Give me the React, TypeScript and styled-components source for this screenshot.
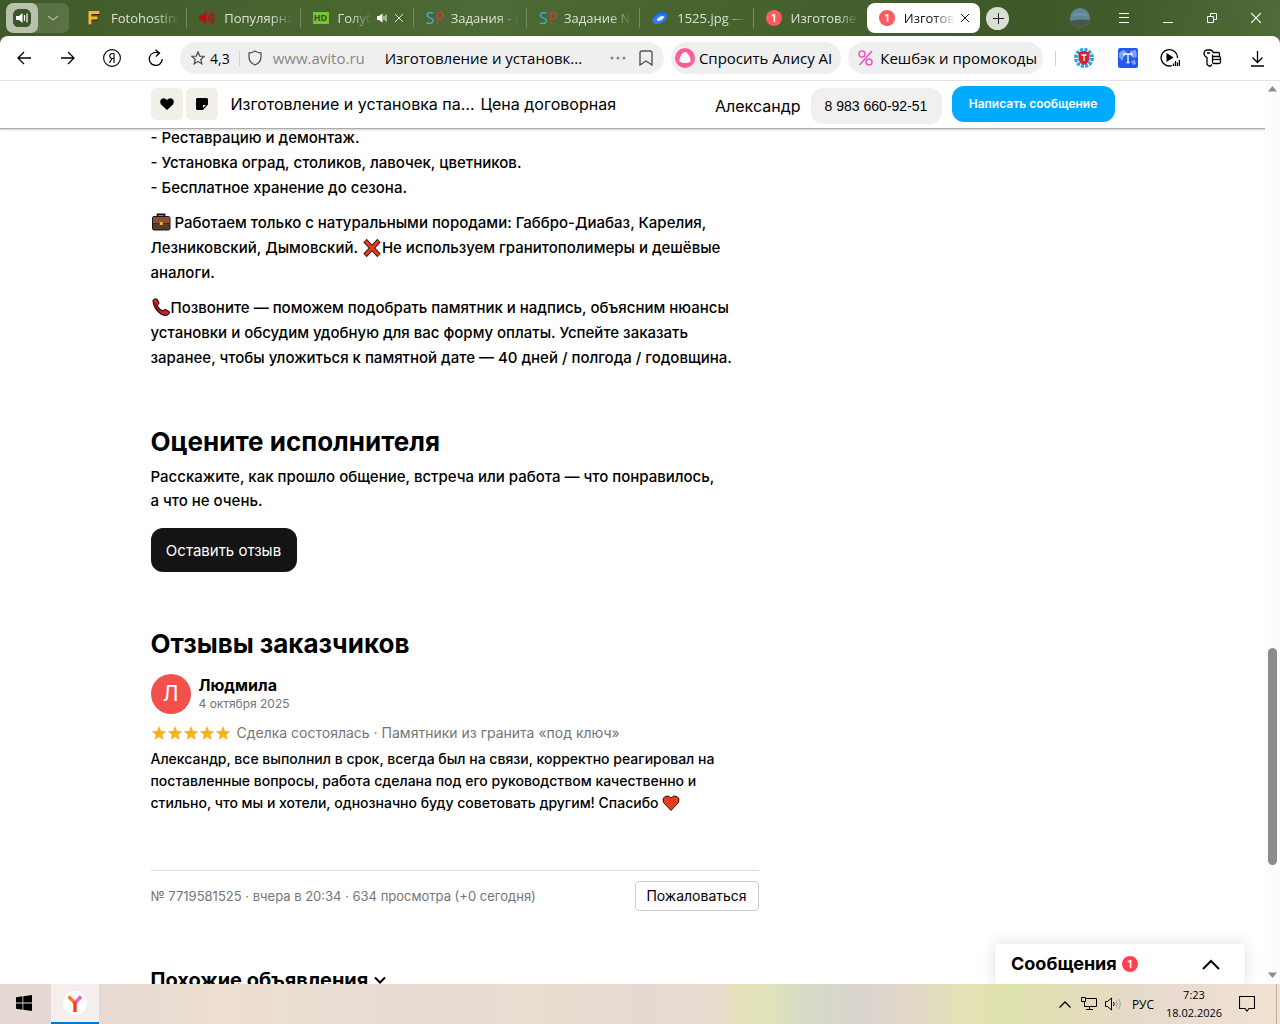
import React from "react";
import styled, { createGlobalStyle, css } from "styled-components";

const pageFont = `Inter, "Noto Sans", sans-serif`;
const uiFont = `"Open Sans", "Noto Sans", sans-serif`;

const GlobalStyle = createGlobalStyle`
  *, *::before, *::after { box-sizing: border-box; }
  body { margin: 0; background: #fff; overflow: hidden; }
  h1, h2, p { margin: 0; }
  button, input { font: inherit; color: inherit; border: 0; padding: 0; margin: 0; background: none; }
  a { color: inherit; text-decoration: none; }
  svg { display: block; flex: none; }
`;

const Shell = styled.div`
  display: flex;
  flex-direction: column;
  height: 100vh;
  font-family: ${uiFont};
  color: #000;
  background: linear-gradient(100deg, #3f5a28 0, #445f2b 10%, #4c6a35 38%, #47632e 55%, #445f2c 68%, #3d5726 80%, #425d2b 88%, #4f6d38 100%) top / 100% 60px no-repeat;
`;

/* ---------- tab strip ---------- */
const TabStrip = styled.header`
  display: flex;
  align-items: center;
  flex: none;
  height: 36px;
  padding-left: 6px;
  color: #fff;
  font-size: 13px;
`;

const SoundGroup = styled.div`
  display: flex;
  flex: none;
  width: 63px;
  height: 30px;
  margin-right: 5px;
  border-radius: 7px;
  overflow: hidden;
  background: rgba(255, 255, 255, 0.13);
`;

const SoundButton = styled.button<{ $on?: boolean }>`
  display: flex;
  align-items: center;
  justify-content: center;
  width: 32px;
  border-radius: 7px;
  background: ${(p) => (p.$on ? "#b7c1ab" : "transparent")};
`;

const Tabs = styled.nav`
  display: flex;
  flex: 0 1 906px;
  min-width: 0;
  height: 30px;
`;

const TabBox = styled.div<{ $active?: boolean; $last?: boolean }>`
  display: flex;
  align-items: center;
  flex: 1 1 0;
  min-width: 0;
  padding: 0 8px 0 12px;
  gap: 3px;
  ${(p) =>
    p.$active
      ? css`
          background: #fff;
          color: #111;
          border-radius: 8px;
        `
      : css`
          color: #dbe1d5;
          background: ${p.$last
            ? "none"
            : "linear-gradient(#768a65, #768a65) right 5px / 1px 20px no-repeat"};
        `}
`;

const TabButton = styled.button`
  display: flex;
  align-items: center;
  flex: 1;
  min-width: 0;
  height: 100%;
  gap: 9px;
`;

const TabLabel = styled.span`
  flex: 1;
  min-width: 0;
  overflow: hidden;
  white-space: nowrap;
  text-align: left;
  line-height: 20px;
  mask-image: linear-gradient(to right, #000 calc(100% - 22px), transparent);
`;

const TinyButton = styled.button`
  display: flex;
  align-items: center;
  justify-content: center;
  flex: none;
  width: 14px;
  height: 16px;
`;

const NewTab = styled.button`
  display: flex;
  align-items: center;
  justify-content: center;
  flex: none;
  width: 23px;
  height: 23px;
  margin-left: 6px;
  border-radius: 50%;
  background: #d9dfd3;
`;

const WindowControls = styled.div`
  display: flex;
  margin-left: auto;
  padding-right: 2px;
`;

const IconCell = styled.button<{ $w?: number }>`
  display: flex;
  align-items: center;
  justify-content: center;
  flex: none;
  width: ${(p) => p.$w ?? 44}px;
  height: 36px;
`;

const CountBadge = styled.span<{ $color?: string }>`
  display: flex;
  align-items: center;
  justify-content: center;
  flex: none;
  width: 16px;
  height: 16px;
  border-radius: 50%;
  background: ${(p) => p.$color ?? "#ff5a5f"};
  color: #fff;
  font: 600 11px/16px ${pageFont};
`;

const SpMark = styled.span`
  flex: none;
  width: 16px;
  font: 16px/20px "Open Sans", sans-serif;
  color: #4ba6d8;
  b { font-weight: 400; color: #b8453c; }
`;

const HdMark = styled.span`
  flex: none;
  width: 16px;
  background: #76c335;
  border-radius: 1px;
  color: #35541b;
  font: 700 9px/12px ${uiFont};
  text-align: center;
`;

/* ---------- toolbar ---------- */
const Toolbar = styled.div`
  display: flex;
  align-items: center;
  flex: none;
  height: 45px;
  padding: 0 1px 0 2px;
  background: #fff;
  border-bottom: 1px solid #e2e2e2;
  border-radius: 8px 8px 0 0;
  font-size: 15px;
`;

const AddressBar = styled.div`
  display: flex;
  align-items: center;
  flex: 1 1 0;
  min-width: 0;
  height: 32px;
  margin-left: 2px;
  padding: 0 6px 0 11px;
  border-radius: 16px;
  background: #efefef;
`;

const Rating = styled.button`
  display: flex;
  align-items: center;
  gap: 5px;
  font-size: 14px;
`;

const Divider = styled.span<{ $before: number; $after: number }>`
  flex: none;
  width: 1px;
  height: 15px;
  margin: 0 ${(p) => p.$after}px 0 ${(p) => p.$before}px;
  background: #d2d2d2;
`;

const Host = styled.a`
  margin: 0 20px 0 11px;
  color: #888;
`;

const AddressInput = styled.input`
  flex: 1;
  min-width: 0;
  outline: none;
  text-overflow: ellipsis;
`;

const Pill = styled.button<{ $end: number }>`
  display: flex;
  align-items: center;
  flex: none;
  gap: 4px;
  height: 32px;
  margin-left: 7px;
  padding: 0 ${(p) => p.$end}px 0 4px;
  border-radius: 16px;
  background: #efefef;
  white-space: nowrap;
`;

/* ---------- page ---------- */
const Viewport = styled.div`
  position: relative;
  display: flex;
  flex: 1;
  min-height: 0;
  background: #fff;
`;

const Page = styled.div`
  flex: 1;
  min-width: 0;
  overflow: hidden;
  font-family: ${pageFont};
`;

const StickyBar = styled.div`
  position: relative;
  z-index: 1;
  height: 48px;
  background: #fff;
  border-bottom: 1px solid #aaa;
  box-shadow: 0 1px 2px rgba(0, 0, 0, 0.2);
`;

const Container = styled.div`
  max-width: 964px;
  margin: 0 auto;
`;

const BarRow = styled(Container)`
  display: flex;
  align-items: flex-start;
  padding-top: 5px;
  font-size: 16px;
  line-height: 24px;
  white-space: nowrap;
`;

const SquareButton = styled.button`
  display: flex;
  align-items: center;
  justify-content: center;
  width: 32px;
  height: 32px;
  margin: 2px 3px 0 0;
  border-radius: 5px;
  background: #f2efe8;
`;

const BarTitle = styled.span`
  width: 250px;
  margin-left: 10px;
  padding-top: 6px;
`;

const BarPrice = styled.span`
  padding-top: 6px;
`;

const Seller = styled.a`
  margin-left: auto;
  padding-top: 8px;
`;

const PhoneButton = styled.button`
  width: 131px;
  height: 36px;
  margin: 2px 10px 0;
  border-radius: 12px;
  background: #f1f0ee;
  font: 14px "Liberation Sans", Arial, sans-serif;
`;

const MessageButton = styled.button`
  width: 163px;
  height: 36px;
  border-radius: 12px;
  background: #00aaff;
  color: #fff;
  font-size: 12px;
  font-weight: 600;
`;

const Article = styled.main`
  max-width: 608px;
  margin-top: -4px;
`;

const Description = styled.section`
  display: flex;
  flex-direction: column;
  gap: 10px;
  font-size: 15px;
  font-weight: 500;
  line-height: 25px;
  white-space: nowrap;
`;

const Emoji = styled.svg`
  display: inline-block;
  vertical-align: -4px;
`;

const Title = styled.h2`
  font-size: 26px;
  line-height: 32px;
  font-weight: 700;
`;

const Rate = styled.section`
  padding: 56px 0;
  p {
    margin: 7px 0 15px;
    font-size: 15px;
    font-weight: 500;
    line-height: 24px;
    white-space: nowrap;
  }
`;

const DarkButton = styled.button`
  display: block;
  width: 146px;
  height: 44px;
  border-radius: 12px;
  background: #141414;
  color: #fff;
  font-size: 15px;
`;

const Author = styled.div`
  display: flex;
  gap: 8px;
  margin-top: 14px;
`;

const Avatar = styled.span`
  width: 40px;
  height: 40px;
  border-radius: 50%;
  background: #f2504b;
  color: #fff;
  font-size: 21px;
  line-height: 40px;
  text-align: center;
`;

const AuthorText = styled.div`
  strong { display: block; font-size: 16px; line-height: 22px; }
  time { display: block; font-size: 12px; line-height: 16px; color: #757575; }
`;

const Deal = styled.p`
  display: flex;
  align-items: center;
  margin-top: 8px;
  font-size: 14px;
  line-height: 22px;
  color: #757575;
  gap: 6px;
`;

const Stars = styled.span`
  display: flex;
`;

const ReviewText = styled.p`
  margin-top: 4px;
  font-size: 14px;
  font-weight: 500;
  line-height: 22px;
  white-space: nowrap;
`;

const Meta = styled.footer`
  display: flex;
  align-items: center;
  justify-content: space-between;
  margin-top: 56px;
  padding-top: 10px;
  border-top: 1px solid #dadada;
  font-size: 13px;
  color: #757575;
`;

const ReportButton = styled.button`
  width: 124px;
  height: 30px;
  padding-bottom: 2px;
  border: 1px solid #ccc;
  border-radius: 4px;
  color: #000;
  font-size: 14px;
`;

const Similar = styled.h2`
  display: flex;
  align-items: center;
  gap: 6px;
  margin-top: 55px;
  font-size: 20px;
  line-height: 28px;
`;

const Scrollbar = styled.div`
  display: flex;
  flex-direction: column;
  align-items: center;
  flex: none;
  width: 15px;
  padding: 5px 0 6px;
  background: #fcfcfc;
`;

const Thumb = styled.span`
  width: 9px;
  flex: 217 1 0;
  border-radius: 5px;
  background: #8b8b8b;
`;

const Space = styled.span<{ $grow: number }>`
  flex: ${(p) => p.$grow} 1 0;
`;

const Chat = styled.button`
  position: absolute;
  right: 35px;
  bottom: 0;
  z-index: 2;
  display: flex;
  align-items: center;
  gap: 5px;
  width: 250px;
  height: 40px;
  padding: 0 25px 0 16px;
  border-radius: 4px;
  background: #fff;
  box-shadow: 0 0 16px rgba(0, 0, 0, 0.14);
  font: 700 18px/24px ${pageFont};
  svg { margin-left: auto; }
`;

/* ---------- taskbar ---------- */
const Taskbar = styled.footer`
  position: relative;
  z-index: 3;
  display: flex;
  flex: none;
  height: 40px;
  font-size: 12px;
  background: linear-gradient(90deg, #e5d8d3 0, #e7dad2 10%, #ecdfd1 17%, #e8dbd3 32%, #e9dcd0 42%, #e6d9d1 50%, #e7dacf 56%, #e6dfba 57.5%, #e0e3ba 60%, #d6dbc6 63%, #dad4d0 67.5%, #e2d7c9 71%, #e3e1b6 75%, #dfe3ae 79%, #e4dcbc 85%, #e7dad0 91%, #f1e2d1 100%);
`;

const AppButton = styled.button<{ $active?: boolean }>`
  display: flex;
  align-items: center;
  justify-content: center;
  width: 48px;
  margin-right: 3px;
  border-bottom: 2px solid ${(p) => (p.$active ? "#0078d7" : "transparent")};
  background: ${(p) => (p.$active ? "#f4efec" : "transparent")};
`;

const Tray = styled.div`
  display: flex;
  align-items: center;
  margin-left: auto;
  border-right: 1px solid #b9aca2;
  margin-right: 3px;
`;

const TrayButton = styled.button<{ $w: number }>`
  display: flex;
  align-items: center;
  justify-content: center;
  width: ${(p) => p.$w}px;
  height: 40px;
`;

const Clock = styled.button`
  width: 66px;
  font-size: 11px;
  line-height: 18px;
  text-align: center;
  white-space: nowrap;
`;

/* ---------- drawings ---------- */
const Cross = ({ size = 10, w = 1 }: { size?: number; w?: number }) => (
  <svg width={size} height={size} viewBox="0 0 10 10" stroke="currentColor" strokeWidth={w}>
    <path d="M1 1l8 8M9 1l-8 8" />
  </svg>
);

const Speaker = ({ size, color }: { size: number; color: string }) => (
  <svg width={size} height={size} viewBox="0 0 16 16" fill="none" stroke={color} strokeWidth="1.5">
    <path d="M0 5.500h2.500L7.500 1.500v13L2.500 10.500H0z" fill={color} stroke="none" />
    <path d="M9 5.500q1.600 2.500 0 5M11 3.500q3 4.500 0 9M13 2q4 6 0 12" />
  </svg>
);

const SmallSpeaker = () => (
  <svg width="10" height="10" viewBox="0 0 10 10">
    <path d="M0 3h2l3.500-2.500v9L2 7H0z" fill="#fff" />
    <path d="M7 3v4M9 1.500v7" stroke="#fff" />
  </svg>
);

const FotoIcon = () => (
  <svg width="16" height="16" viewBox="0 0 16 16">
    <path d="M4.500 3v12M5 3.500h9M5 9h7" stroke="#3a2410" strokeWidth="3" fill="none" />
    <path d="M4 1v13.500M3 2.500h10.500M3 8h8.500" stroke="#ffb52e" strokeWidth="3" fill="none" />
  </svg>
);

const DiskIcon = () => (
  <svg width="16" height="14" viewBox="0 0 17 14">
    <ellipse cx="9" cy="5.500" rx="7.500" ry="4.600" transform="rotate(-24 9 5.500)" fill="#1f62e8" />
    <ellipse cx="8" cy="8" rx="8" ry="4.600" transform="rotate(-24 8 8)" fill="#2f7bff" />
    <ellipse cx="9" cy="7.500" rx="4" ry="1.800" transform="rotate(-30 9 7.500)" fill="#fff" />
  </svg>
);

const Star = () => (
  <svg width="16" height="16" viewBox="0 0 16 16" fill="#ffaf1c">
    <path d="M8 .8l2 5.100 5.400.3-4.200 3.500 1.400 5.300L8 12l-4.600 3 1.400-5.300L.6 6.200 6 5.900z" />
  </svg>
);

const Briefcase = () => (
  <Emoji width="20" height="20" viewBox="0 0 20 20">
    <path d="M6.500 5V2.500h7V5" fill="none" stroke="#1c1412" strokeWidth="1.800" />
    <rect x="1.500" y="4.500" width="17.500" height="13.500" rx="1.500" fill="#5b3a32" stroke="#1c1412" />
    <path d="M2 5h16.500v6.500H2z" fill="#8a5335" />
    <path d="M2 11.500h16.500" stroke="#43291f" />
    <rect x="8.800" y="10" width="3" height="3" rx=".5" fill="#f5b51d" />
  </Emoji>
);

const RedCross = () => (
  <Emoji width="20" height="18" viewBox="0 0 20 18">
    <path d="M3 1.500l14 15M17 1.500L3 16.500" stroke="#241512" strokeWidth="4.800" />
    <path d="M3.400 2l13.200 14M16.600 2L3.400 16" stroke="#e93a1c" strokeWidth="3" />
  </Emoji>
);

const Handset = () => (
  <Emoji width="20" height="20" viewBox="0 0 20 20">
    <path
      d="M2 3.500Q4 1 6 2.500l2 3.500-2 2.500q2 4 5.500 5.500l2.500-1.500 4 2q1 1.500-1.500 3.500-4 1.500-9-3T2 3.500z"
      fill="#d91e2e"
      stroke="#241512"
      strokeWidth="1.200"
    />
    <path d="M3.500 6q1 5 5.500 9" stroke="#8f0f1c" strokeWidth="1.500" fill="none" />
  </Emoji>
);

const RedHeart = () => (
  <Emoji width="18" height="18" viewBox="0 0 18 18">
    <path
      d="M9 16.500L1.500 8.500Q-.2 4.500 3 2.500 6.500.800 9 4q2.500-3.200 6-1.500 3.200 2 1.500 6z"
      fill="#ef3b17"
      stroke="#241512"
    />
  </Emoji>
);

const tabs: { icon: React.ReactNode; label: string; sound?: boolean; active?: boolean; last?: boolean }[] = [
  { icon: <FotoIcon />, label: "Fotohosting" },
  { icon: <Speaker size={16} color="#b80f0f" />, label: "Популярна" },
  { icon: <HdMark>HD</HdMark>, label: "Голуб", sound: true },
  { icon: <SpMark>S<b>P</b></SpMark>, label: "Задания - в" },
  { icon: <SpMark>S<b>P</b></SpMark>, label: "Задание №" },
  { icon: <DiskIcon />, label: "1525.jpg —" },
  { icon: <CountBadge>1</CountBadge>, label: "Изготовле", last: true },
  { icon: <CountBadge>1</CountBadge>, label: "Изготов", active: true },
];

const line = { fill: "none", stroke: "currentColor", strokeWidth: 1.3 } as const;

export default function App() {
  return (
    <>
      <GlobalStyle />
      <Shell>
        <TabStrip>
          <SoundGroup>
            <SoundButton $on aria-label="Звук">
              <svg width="18" height="18" viewBox="0 0 18 18">
                <path d="M5 0h8q4 1 5 5v9q-1 3-4 4H4q-3-1-4-4V5q1-4 5-5z" fill="#3c5428" />
                <path d="M3 7h3l3.500-3v10L6 11H3z" fill="#fff" />
                <path d="M11.500 6v6M14 4.500v9" stroke="#fff" strokeWidth="1.200" />
              </svg>
            </SoundButton>
            <SoundButton aria-label="Список вкладок">
              <svg width="12" height="7" viewBox="0 0 12 7" {...line} stroke="#aebaa3">
                <path d="M1 1l5 4 5-4" />
              </svg>
            </SoundButton>
          </SoundGroup>
          <Tabs aria-label="Вкладки">
            {tabs.map((t, i) => (
              <TabBox key={i} $active={t.active} $last={t.last}>
                <TabButton>
                  {t.icon}
                  <TabLabel>{t.label}</TabLabel>
                </TabButton>
                {t.sound && (
                  <TinyButton aria-label="Выключить звук">
                    <SmallSpeaker />
                  </TinyButton>
                )}
                {(t.sound || t.active) && (
                  <TinyButton aria-label="Закрыть вкладку">
                    <Cross />
                  </TinyButton>
                )}
              </TabBox>
            ))}
          </Tabs>
          <NewTab aria-label="Новая вкладка">
            <svg width="12" height="12" viewBox="0 0 12 12" stroke="#222">
              <path d="M6.500 1v11M1 6.500h11" />
            </svg>
          </NewTab>
          <WindowControls>
            <IconCell aria-label="Профиль">
              <svg width="20" height="20" viewBox="0 0 20 20">
                <circle cx="10" cy="10" r="10" fill="#5f8796" />
                <path d="M.4 13q5-1.500 9.600-1.500t9.600 .5a10 10 0 0 1-19.200 1z" fill="#46584a" />
                <path d="M2.500 6q7.500-3 15 0l.5 2H2z" fill="#6c909f" />
              </svg>
            </IconCell>
            <IconCell aria-label="Меню">
              <svg width="10" height="10" viewBox="0 0 10 10" stroke="#fff">
                <path d="M0 .5h10M0 4.500h10M0 9.500h10" />
              </svg>
            </IconCell>
            <IconCell aria-label="Свернуть">
              <svg width="10" height="10" viewBox="0 0 10 10" stroke="#fff">
                <path d="M0 9.500h10" />
              </svg>
            </IconCell>
            <IconCell aria-label="Восстановить">
              <svg width="10" height="10" viewBox="0 0 10 10" fill="none" stroke="#fff">
                <path d="M.5 3.500h6v6h-6zM3.500 3.500v-3h6v6h-3" />
              </svg>
            </IconCell>
            <IconCell aria-label="Закрыть">
              <Cross size={12} />
            </IconCell>
          </WindowControls>
        </TabStrip>

        <Toolbar>
          <IconCell aria-label="Назад">
            <svg width="14" height="14" viewBox="0 0 14 14" {...line}>
              <path d="M14 7H1M7 1L1 7l6 6" />
            </svg>
          </IconCell>
          <IconCell aria-label="Вперёд">
            <svg width="14" height="14" viewBox="0 0 14 14" {...line}>
              <path d="M0 7h13M7 1l6 6-6 6" />
            </svg>
          </IconCell>
          <IconCell aria-label="Яндекс">
            <svg width="18" height="18" viewBox="0 0 18 18" {...line} strokeWidth={1.1}>
              <circle cx="9" cy="9" r="8.400" />
              <path d="M11 14V4.500H9.300Q6.800 4.700 6.800 7T9.300 9.500H11M9 9.500L6.500 14" />
            </svg>
          </IconCell>
          <IconCell aria-label="Обновить">
            <svg width="16" height="18" viewBox="0 0 16 18" {...line}>
              <path d="M14.300 10A6.500 6.500 0 1 1 11 4.200M7.500 .8L11.500 4 8 7.500" />
            </svg>
          </IconCell>
          <AddressBar>
            <Rating>
              <svg width="14" height="14" viewBox="0 0 16 16" fill="none" stroke="#555" strokeWidth="1.500">
                <path d="M8 1l2 4.800 5 .4-3.800 3.400 1.200 5L8 12l-4.400 2.600 1.200-5L1 6.200l5-.4z" />
              </svg>
              4,3
            </Rating>
            <Divider $before={9} $after={8} />
            <svg width="14" height="16" viewBox="0 0 14 16" fill="none" stroke="#555" strokeWidth="1.300">
              <path d="M7 1q3 2 6 2v4q0 5.500-6 8-6-2.500-6-8V3q3 0 6-2z" />
            </svg>
            <Host href="#">www.avito.ru</Host>
            <AddressInput aria-label="Адресная строка" defaultValue="Изготовление и установк..." />
            <IconCell $w={32} aria-label="Ещё">
              <svg width="16" height="4" viewBox="0 0 16 4" fill="#888">
                <circle cx="2" cy="2" r="1.500" />
                <circle cx="8" cy="2" r="1.500" />
                <circle cx="14" cy="2" r="1.500" />
              </svg>
            </IconCell>
            <IconCell $w={24} aria-label="В закладки">
              <svg width="14" height="16" viewBox="0 0 14 16" fill="none" stroke="#555" strokeWidth="1.400">
                <path d="M1 15V3q0-2 2-2h8q2 0 2 2v12l-6-4z" />
              </svg>
            </IconCell>
          </AddressBar>
          <Pill $end={9}>
            <svg width="20" height="20" viewBox="0 0 20 20">
              <circle cx="10" cy="10" r="10" fill="#ff5c9a" />
              <path d="M10 4q2.500 0 4.500 4.500T15 14q-2 1-5 1t-5-1q-1.500-1 .500-5.500T10 4z" fill="#fff" />
            </svg>
            Спросить Алису AI
          </Pill>
          <Pill $end={6}>
            <svg width="24" height="16" viewBox="0 0 24 16" fill="none" stroke="#ec55c0" strokeWidth="1.500">
              <circle cx="10" cy="4" r="3" />
              <circle cx="17" cy="12" r="3" />
              <path d="M20 1L7.500 15" />
            </svg>
            Кешбэк и промокоды
          </Pill>
          <Divider $before={12} $after={6} />
          <IconCell aria-label="Защита">
            <svg width="20" height="20" viewBox="0 0 20 20">
              <circle cx="10" cy="10" r="8" fill="none" stroke="#2ba2ea" strokeWidth="4" strokeDasharray="3 1.200" />
              <path d="M10 3l5.500 1.500V10q0 5-5.500 7-5.500-2-5.500-7V4.500z" fill="#d3202b" />
              <path d="M7.500 7h5M10 7v6" stroke="#fff" strokeWidth="1.300" />
            </svg>
          </IconCell>
          <IconCell aria-label="Переводчик">
            <svg width="20" height="20" viewBox="0 0 20 20">
              <rect width="20" height="20" rx="2" fill="#2459ea" />
              <path d="M1 5l4-3 4 2-3 5-2 4-3-4zM12 3l6-1 1 7-4 1-3-3zM13 13l4-1 1 4-3 1z" fill="#7fa2f8" />
              <path d="M6 6h8M10 5.500v9M8.500 14.500h3M6 5.500v2M14 5.500v2" stroke="#fff" strokeWidth="1.300" />
            </svg>
          </IconCell>
          <IconCell $w={40} aria-label="Плеер">
            <svg width="20" height="20" viewBox="0 0 20 20" {...line}>
              <path d="M12 17.500A8.200 8.200 0 1 1 17.500 10" />
              <path d="M6.500 5v9l7-4.500z" fill="#000" stroke="none" />
              <path d="M13.500 18v-2.500M15.500 18v-5M17.500 18v-3.500M19.400 18v-6" />
            </svg>
          </IconCell>
          <IconCell $w={45} aria-label="Пароли">
            <svg width="19" height="18" viewBox="0 0 19 18" {...line}>
              <path d="M9 15.500l-1.500 1.500H6L4 15.500V8.500Q1 7 1 4.500 1 1 4.500 1H7q2.500 0 3 2.500" />
              <path d="M4 4h3M10 3.500h5.500q1 0 1 1.500v2" />
              <path d="M9.500 7.500h6.500q1.500 0 1.500 1.500v4q0 1.500-1.500 1.500h-5q-1.500 0-1.500-1.500zM9.500 7.500V5.500" />
              <path d="M9.500 10.500h8" />
            </svg>
          </IconCell>
          <IconCell aria-label="Загрузки">
            <svg width="13" height="17" viewBox="0 0 13 17" {...line}>
              <path d="M6.500 1v11M1.500 7.500l5 5 5-5M0 16h13" />
            </svg>
          </IconCell>
        </Toolbar>

        <Viewport>
          <Page>
            <StickyBar>
              <BarRow>
                <SquareButton aria-label="В избранное">
                  <svg width="14" height="12" viewBox="0 0 14 12">
                    <path d="M7 12L1 6.500Q-.8 3 1.500 1 4.500-1 7 2q2.500-3 5.500-1 2.300 2 .5 5.500z" />
                  </svg>
                </SquareButton>
                <SquareButton aria-label="Заметка">
                  <svg width="12" height="12" viewBox="0 0 12 12">
                    <path d="M1 0h10l1 1v5.500L7 12H1l-1-1V1z" />
                    <path d="M7 10V7h3z" fill="#f2efe8" />
                  </svg>
                </SquareButton>
                <BarTitle>Изготовление и установка па…</BarTitle>
                <BarPrice>Цена договорная</BarPrice>
                <Seller href="#">Александр</Seller>
                <PhoneButton>8 983 660-92-51</PhoneButton>
                <MessageButton>Написать сообщение</MessageButton>
              </BarRow>
            </StickyBar>
            <Container>
              <Article>
                <Description>
                  <p>
                    - Реставрацию и демонтаж.
                    <br />- Установка оград, столиков, лавочек, цветников.
                    <br />- Бесплатное хранение до сезона.
                  </p>
                  <p>
                    <Briefcase /> Работаем только с натуральными породами: Габбро-Диабаз, Карелия,
                    <br />
                    Лезниковский, Дымовский. <RedCross />Не используем гранитополимеры и дешёвые
                    <br />
                    аналоги.
                  </p>
                  <p>
                    <Handset />Позвоните — поможем подобрать памятник и надпись, объясним нюансы
                    <br />
                    установки и обсудим удобную для вас форму оплаты. Успейте заказать
                    <br />
                    заранее, чтобы уложиться к памятной дате — 40 дней / полгода / годовщина.
                  </p>
                </Description>
                <Rate>
                  <Title>Оцените исполнителя</Title>
                  <p>
                    Расскажите, как прошло общение, встреча или работа — что понравилось,
                    <br />а что не очень.
                  </p>
                  <DarkButton>Оставить отзыв</DarkButton>
                </Rate>
                <Title>Отзывы заказчиков</Title>
                <Author>
                  <Avatar>Л</Avatar>
                  <AuthorText>
                    <strong>Людмила</strong>
                    <time>4 октября 2025</time>
                  </AuthorText>
                </Author>
                <Deal>
                  <Stars>
                    {[0, 1, 2, 3, 4].map((n) => (
                      <Star key={n} />
                    ))}
                  </Stars>
                  Сделка состоялась · Памятники из гранита «под ключ»
                </Deal>
                <ReviewText>
                  Александр, все выполнил в срок, всегда был на связи, корректно реагировал на
                  <br />
                  поставленные вопросы, работа сделана под его руководством качественно и
                  <br />
                  стильно, что мы и хотели, однозначно буду советовать другим! Спасибо <RedHeart />
                </ReviewText>
                <Meta>
                  <span>№ 7719581525 · вчера в 20:34 · 634 просмотра (+0 сегодня)</span>
                  <ReportButton>Пожаловаться</ReportButton>
                </Meta>
                <Similar>
                  Похожие объявления
                  <svg width="12" height="8" viewBox="0 0 12 8" fill="none" stroke="#000" strokeWidth="2">
                    <path d="M1 1.500l5 5 5-5" />
                  </svg>
                </Similar>
              </Article>
            </Container>
          </Page>
          <Scrollbar>
            <svg width="9" height="6" viewBox="0 0 9 6" fill="#8b8b8b"><path d="M0 5.500L4.500 0 9 5.500z" /></svg>
            <Space $grow={557} />
            <Thumb />
            <Space $grow={107} />
            <svg width="9" height="6" viewBox="0 0 9 6" fill="#8b8b8b"><path d="M0 .5L4.500 6 9 .5z" /></svg>
          </Scrollbar>
          <Chat>
            Сообщения
            <CountBadge $color="#ff4053">1</CountBadge>
            <svg width="18" height="11" viewBox="0 0 18 11" fill="none" stroke="#000" strokeWidth="2">
              <path d="M1 10l8-8 8 8" />
            </svg>
          </Chat>
        </Viewport>

        <Taskbar>
          <AppButton aria-label="Пуск">
            <svg width="16" height="16" viewBox="0 0 16 16">
              <path d="M0 2.200l6.500-.9v6.200H0zM7.300 1.200L16 0v7.500H7.300zM0 8.400h6.500v6.300L0 13.800zM7.300 8.400H16V16l-8.700-1.200z" />
            </svg>
          </AppButton>
          <AppButton $active aria-label="Яндекс Браузер">
            <svg width="24" height="24" viewBox="0 0 24 24" fill="none" strokeWidth="3.400">
              <circle cx="12" cy="12" r="12" fill="#fff" />
              <path d="M12 12l6-6.500" stroke="#f05ad0" />
              <path d="M5.500 5.500L12 12" stroke="#ff7a1a" />
              <path d="M12 10.500V21" stroke="#fb3b22" />
            </svg>
          </AppButton>
          <Tray>
            <TrayButton $w={24} aria-label="Скрытые значки">
              <svg width="12" height="7" viewBox="0 0 12 7" {...line}><path d="M.5 6.500L6 1l5.500 5.500" /></svg>
            </TrayButton>
            <TrayButton $w={24} aria-label="Сеть">
              <svg width="16" height="14" viewBox="0 0 16 14" {...line} strokeWidth={1}>
                <path d="M5 1.500h10.500v8H3.500V5M.5.500h4v4h-4zM8.500 9.500v3M5 12.500h7" />
              </svg>
            </TrayButton>
            <TrayButton $w={24} aria-label="Громкость">
              <svg width="17" height="14" viewBox="0 0 17 14" {...line} strokeWidth={1}>
                <path d="M.5 4.500h2l4-3.500v12l-4-3.500h-2zM8.500 5q1.500 2 0 4" />
                <path d="M11 3.500q2.500 3.500 0 7M13.500 2q3.500 5 0 10" stroke="#999" />
              </svg>
            </TrayButton>
            <TrayButton $w={36}>РУС</TrayButton>
            <Clock>
              7:23
              <br />
              18.02.2026
            </Clock>
            <TrayButton $w={40} aria-label="Уведомления">
              <svg width="16" height="16" viewBox="0 0 16 16" {...line} strokeWidth={1.100}>
                <path d="M.5.500h15v12H10l-2 2.500-2-2.500H.5z" />
              </svg>
            </TrayButton>
            <TrayButton $w={9} aria-label="Показать рабочий стол" />
          </Tray>
        </Taskbar>
      </Shell>
    </>
  );
}
